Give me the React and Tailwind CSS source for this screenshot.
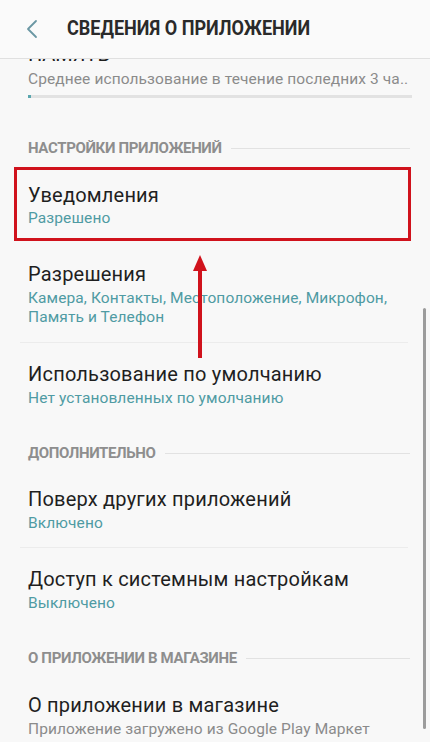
import React from 'react'

const body = { fontFamily: 'Roboto, "Liberation Sans", sans-serif' }

const SectionHeader = ({ title, className }) => (
  <div className={`flex items-center pl-[28px] pr-[20px] h-[20px] ${className}`}>
    <span className="text-[15px] font-bold text-[#8e8e8e] leading-[20px] tracking-[-0.35px] whitespace-nowrap">
      {title}
    </span>
    <div className="flex-1 h-px bg-[#e2e2e2] ml-[9px]" />
  </div>
)

const Item = ({ title, sub, subColor = 'text-[#4f9ba3]', className }) => (
  <div className={`pl-[28px] pr-[20px] ${className}`}>
    <div className="text-[20px] leading-[24px] tracking-[0.2px] text-[#1f1f1f]">{title}</div>
    {sub && (
      <div className={`text-[15.5px] leading-[20px] tracking-[0.1px] mt-[2px] ${subColor}`}>{sub}</div>
    )}
  </div>
)

const Divider = ({ className }) => (
  <div className={`ml-[20px] mr-[22px] h-px bg-[#ececec] ${className}`} />
)

export default function App() {
  return (
    <div className="relative w-[430px] h-[742px] overflow-hidden bg-[#f8f8f8]" style={body}>
      {/* Header */}
      <div className="h-[59px] flex items-center border-b border-[#e0e0e0] bg-[#fafafa]">
        <svg className="ml-[25px]" width="13" height="20" viewBox="0 0 13 20" fill="none">
          <path d="M11 2 L3 10 L11 18" stroke="#6a97a3" strokeWidth="1.8" strokeLinecap="round" strokeLinejoin="round" />
        </svg>
        <div className="ml-[29px] text-[21px] font-bold text-[#2a2a2a] whitespace-nowrap origin-left scale-x-[0.86]">
          СВЕДЕНИЯ О ПРИЛОЖЕНИИ
        </div>
      </div>

      {/* Cut-off memory row */}
      <div className="h-[6px] overflow-hidden pl-[28px]">
        <div className="text-[20px] leading-[24px] text-[#1f1f1f] -mt-[17px]">ПАМЯТЬ</div>
      </div>
      <div className="pl-[28px] pr-[20px] mt-[4px] text-[15.5px] leading-[20px] tracking-[0.1px] text-[#8b8b8b] whitespace-nowrap">
        Среднее использование в течение последних 3 ча..
      </div>
      <div className="ml-[28px] mr-[18px] mt-[6px] h-[3px] bg-[#e2e2e2] flex">
        <div className="w-[3px] h-full bg-[#5aa6ae]" />
      </div>

      <SectionHeader title="НАСТРОЙКИ ПРИЛОЖЕНИЙ" className="mt-[40px]" />

      <div className="ml-[14px] w-[397px] h-[74px] mt-[9px] border-[3px] border-[#d0121c] pl-[11px] pt-[13px]">
        <div className="text-[20px] leading-[24px] tracking-[0.2px] text-[#1f1f1f]">Уведомления</div>
        <div className="text-[15.5px] leading-[20px] tracking-[0.1px] mt-[1px] text-[#4f9ba3]">Разрешено</div>
      </div>

      <div className="pl-[28px] pr-[20px] mt-[21px]">
        <div className="text-[20px] leading-[24px] tracking-[0.2px] text-[#1f1f1f]">Разрешения</div>
        <div className="text-[15.5px] leading-[19px] tracking-[0.1px] mt-[3px] text-[#4f9ba3]">
          Камера, Контакты, Местоположение, Микрофон,
          <br />
          Память и Телефон
        </div>
      </div>
      <Divider className="mt-[15px]" />

      <Item title="Использование по умолчанию" sub="Нет установленных по умолчанию" className="mt-[19px]" />

      <SectionHeader title="ДОПОЛНИТЕЛЬНО" className="mt-[35px]" />

      <Item title="Поверх других приложений" sub="Включено" className="mt-[24px]" />
      <Divider className="mt-[14px]" />
      <Item title="Доступ к системным настройкам" sub="Выключено" className="mt-[19px]" />

      <SectionHeader title="О ПРИЛОЖЕНИИ В МАГАЗИНЕ" className="mt-[35px]" />

      <Item
        title="О приложении в магазине"
        sub="Приложение загружено из Google Play Маркет"
        subColor="text-[#8b8b8b]"
        className="mt-[25px]"
      />

      {/* Scrollbar */}
      <div className="absolute left-[423px] top-[308px] w-[3px] h-[421px] bg-[#9c9c9c] rounded-full" />

      {/* Red arrow annotation */}
      <svg className="absolute left-[190px] top-[252px]" width="20" height="108" viewBox="0 0 20 108">
        <path d="M10 3 L17 19 L3 19 Z" fill="#d0121c" />
        <rect x="8" y="17" width="4" height="89" fill="#d0121c" />
      </svg>
    </div>
  )
}
